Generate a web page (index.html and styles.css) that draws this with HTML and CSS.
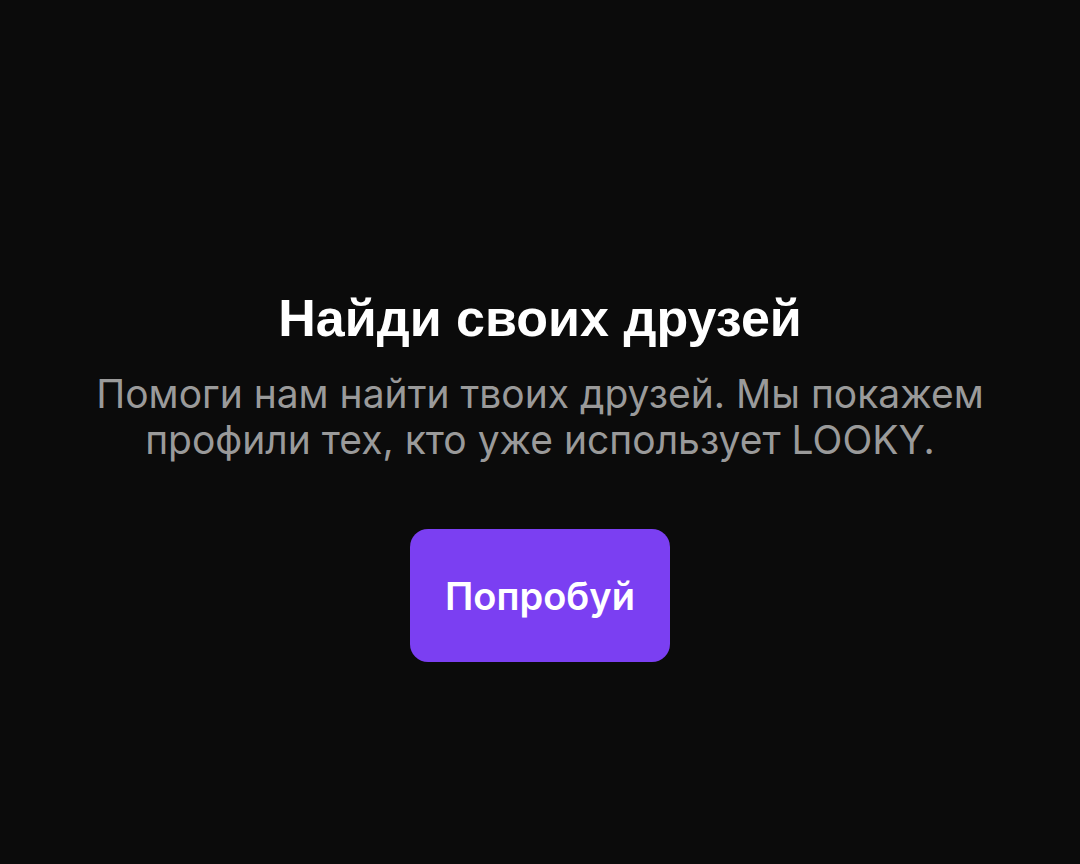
FILE: index.html
```html
<!DOCTYPE html>
<html lang="ru">
<head>
<meta charset="utf-8">
<link rel="stylesheet" href="styles.css">
</head>
<body>
<main class="screen">
  <h1 class="title">Найди своих друзей</h1>
  <p class="subtitle">Помоги нам найти твоих друзей. Мы покажем профили тех, кто уже использует LOOKY.</p>
  <button class="cta">Попробуй</button>
</main>
</body>
</html>
```
FILE: styles.css
```css
html, body {
  margin: 0;
  padding: 0;
  background: #0b0b0b;
  height: 100%;
}
.screen {
  display: flex;
  flex-direction: column;
  align-items: center;
  padding-top: 286px;
  box-sizing: border-box;
  height: 864px;
}
.title {
  margin: 0;
  font-family: "Liberation Sans", Arial, sans-serif;
  font-weight: 700;
  font-size: 52px;
  line-height: 64px;
  color: #ffffff;
}
.subtitle {
  margin: 21px 0 0;
  width: 940px;
  text-align: center;
  font-family: Inter, "Noto Sans", sans-serif;
  font-size: 39px;
  line-height: 46px;
  color: #9a9a9a;
}
.cta {
  margin-top: 66px;
  width: 260px;
  height: 133px;
  border: none;
  border-radius: 18px;
  background: #7b3ff2;
  color: #ffffff;
  font-family: Inter, "Noto Sans", sans-serif;
  font-weight: 600;
  font-size: 38px;
  cursor: pointer;
}
```
